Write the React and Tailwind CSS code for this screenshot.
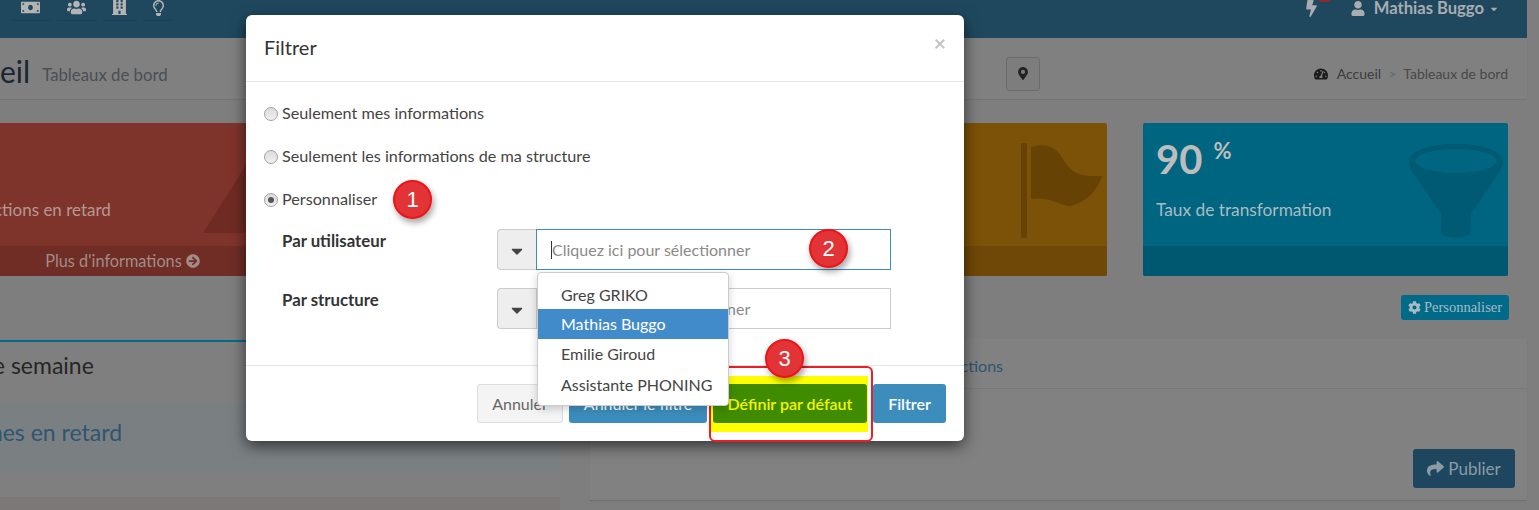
import { useState } from "react";
import {
  FaArrowCircleRight,
  FaBolt,
  FaBuilding,
  FaCaretDown,
  FaCog,
  FaMapMarkerAlt,
  FaMoneyBill,
  FaRegLightbulb,
  FaShare,
  FaTachometerAlt,
  FaUser,
  FaUsers,
} from "react-icons/fa";

const font = "font-['Lato','Liberation_Sans',sans-serif]";

function Funnel() {
  return (
    <svg viewBox="0 0 94 94" className="absolute right-[5px] top-[21px] w-[94px] h-[94px]">
      <path
        d="M0 18C0 6 22 0 47 0s47 6 47 18c0 5-3 10-6 14L62 70v17c0 4-7 7-15 7s-15-3-15-7V70L6 32C3 28 0 23 0 18z"
        fill="#005a74"
      />
      <ellipse cx="47" cy="17" rx="41" ry="12" fill="#006581" />
    </svg>
  );
}

function Flag() {
  return (
    <svg viewBox="0 0 81 95" className="absolute right-[5px] top-[20px] w-[81px] h-[95px]">
      <rect x="0" y="0" width="6" height="95" rx="1" fill="#664204" />
      <path
        d="M10 4C25 0 34 3 42 16c8 14 16 18 39 17-5 17-21 29-33 30-10-1-20-10-38-7z"
        fill="#664204"
      />
    </svg>
  );
}

function Triangle() {
  return (
    <svg viewBox="0 0 86 68" className="absolute left-[263px] top-[42px] w-[86px] h-[68px]">
      <path d="M43 0 86 68H0z" fill="#6f2b23" />
    </svg>
  );
}

function StatCard({ bg, foot, children, footer }) {
  return (
    <div className={`relative h-[153px] rounded-[2px] overflow-hidden flex flex-col ${bg}`}>
      <div className="flex-1 pl-[13px] pt-[16px] text-[#bdbdbd]">{children}</div>
      <div className={`h-[30px] flex items-center justify-center gap-[4px] text-[16.3px] text-[#a08c88] ${foot}`}>
        {footer}
      </div>
    </div>
  );
}

function Background() {
  return (
    <div className="w-[1587px] -ml-[60px]">
      <header className="h-[38px] bg-[#1f485f] flex items-start overflow-hidden pl-[70px]">
        <div className="flex gap-[5px] text-[#b4b4b4]">
          <div className="w-[41px] h-[21px] rounded-b-[4px] border-b border-[#1c4157] flex justify-center">
            <FaMoneyBill className="w-[19px] h-[19px] -mt-[2px]" />
          </div>
          <div className="w-[41px] h-[21px] rounded-b-[4px] border-b border-[#1c4157] flex justify-center">
            <FaUsers className="w-[19px] h-[19px] -mt-[2px]" />
          </div>
          <div className="w-[35px] h-[21px] rounded-b-[4px] border-b border-[#1c4157] flex justify-center">
            <FaBuilding className="w-[15px] h-[19px] -mt-[3px]" />
          </div>
          <div className="w-[32px] h-[21px] rounded-b-[4px] border-b border-[#1c4157] flex justify-center">
            <FaRegLightbulb className="w-[13px] h-[16px]" />
          </div>
        </div>
        <div className="relative ml-auto mr-[28px] flex items-center h-[17px] text-[#a8adb2]">
          <FaBolt className="w-[11px] h-[17px] -ml-[4px]" />
          <span className="absolute left-[8px] -top-[5px] w-[13px] h-[7px] rounded-full bg-[#8c2a2e]" />
          <FaUser className="w-[14px] h-[15px] ml-[34px]" />
          <span className="ml-[9px] text-[16.6px] font-bold">Mathias Buggo</span>
          <FaCaretDown className="w-[10px] h-[10px] ml-[5px]" />
        </div>
      </header>

      <div className="h-[61px] bg-[#808080] flex items-center pr-[19px] pt-[10px] shadow-[0_1px_1px_rgba(0,0,0,0.08)]">
        <h1 className="text-[30px] text-[#1b2530] font-normal leading-none -ml-[5px] -mt-[5px]">Accueil</h1>
        <span className="ml-[12px] mt-[3px] text-[16.8px] text-[#4a4f54]">Tableaux de bord</span>
        <button className="ml-[838px] w-[34px] h-[34px] rounded-[3px] border border-[#6c6c6c] bg-[#7d7d7d] flex items-center justify-center text-[#222]">
          <FaMapMarkerAlt className="w-[10px] h-[13px]" />
        </button>
        <nav className="ml-auto flex items-center text-[14px] text-[#3c3c3c]">
          <FaTachometerAlt className="w-[14px] h-[14px] text-[#1c1c1c] mr-[2px]" />
          <span className="ml-[7px]">Accueil</span>
          <span className="mx-[7px] text-[#666]">&gt;</span>
          <span className="text-[#484848]">Tableaux de bord</span>
        </nav>
      </div>

      <div className="grid grid-cols-[365px_365px_365px_365px] gap-[36px] pt-[24px]">
        <StatCard
          bg="bg-[#7f342b]"
          foot="bg-[#702d26]"
          footer={
            <>
              <span>Plus d'informations</span>
              <FaArrowCircleRight className="w-[14px] h-[14px]" />
            </>
          }
        >
          <Triangle />
          <div className="mt-[58px] -ml-[7px] text-[17px] text-[#b49892]">Transactions en retard</div>
        </StatCard>
        <StatCard bg="bg-[#006581]" foot="bg-[#005870]" />
        <StatCard bg="bg-[#7c5108]" foot="bg-[#6f4807]">
          <Flag />
        </StatCard>
        <StatCard bg="bg-[#006581]" foot="bg-[#005870]">
          <Funnel />
          <div className="flex items-start leading-none font-bold">
            <span className="text-[40px]">90</span>
            <span className="text-[22px] ml-[11px] mt-[1px]">%</span>
          </div>
          <div className="mt-[18px] text-[17.3px] text-[#a9bcc3]">Taux de transformation</div>
        </StatCard>
      </div>

      <div className="flex justify-end pr-[18px] mt-[19px]">
        <button className="h-[25px] w-[108px] rounded-[3px] bg-[#006a88] text-[#a6bcc4] flex items-center justify-center gap-[3px] text-[14.5px] font-['Liberation_Serif',serif]">
          <FaCog className="w-[13px] h-[13px]" />
          Personnaliser
        </button>
      </div>

      <div className="grid grid-cols-[620px_937px] gap-[30px] mt-[19px] items-start">
        <section className="border-t-2 border-t-[#006a88] mt-[1px] h-[170px] bg-[#7f7f7f]">
          <h2 className="h-[61px] pb-[14px] pl-[10px] flex items-center text-[23px] font-normal text-[#262626]">
            Cette semaine
          </h2>
          <div className="h-[70px] bg-[#7a7f82] flex items-center pl-[16px] pb-[12px] text-[23px] text-[#2f5570]">
            Tâches en retard
          </div>
          <div className="h-[24px]" />
          <div className="h-[13px] bg-[#7c7878]" />
        </section>
        <section className="h-[161px] bg-[#818181] shadow-[0_1px_1px_rgba(0,0,0,0.1)]">
          <div className="h-[50px] border-b border-[#787878] flex items-center pl-[360px] pt-[4px] text-[16px] text-[#2f5570]">
            Actions
          </div>
          <div className="flex justify-end pt-[60px] pr-[12px]">
            <button className="w-[102px] h-[39px] rounded-[3px] bg-[#1e475f] text-[#8b9ba6] text-[17px] flex items-center justify-center gap-[4px]">
              <FaShare className="w-[17px] h-[17px]" />
              Publier
            </button>
          </div>
        </section>
      </div>
    </div>
  );
}

function RadioRow({ checked, children }) {
  return (
    <label className="h-[43px] flex items-center text-[16.2px] text-[#444]">
      <span className="w-[14px] h-[14px] mr-[4px] rounded-full border border-[#a3a3a3] bg-gradient-to-b from-[#dcdcdc] to-[#f0f0f0] flex items-center justify-center">
        {checked && <span className="w-[6px] h-[6px] rounded-full bg-[#555]" />}
      </span>
      {children}
    </label>
  );
}

function SelectRow({ label, focused }) {
  return (
    <div className="flex items-start h-[59px] pl-[36px]">
      <div className="w-[215px] -mt-[1px] text-[16.8px] font-bold text-[#333]">{label}</div>
      <div className="flex h-[41px]">
        <div className="w-[39px] rounded-l-[4px] border border-r-0 border-[#ccc] bg-[#eee] flex items-center justify-center text-[#444]">
          <FaCaretDown className="w-[18px] h-[18px] mt-[3px]" />
        </div>
        <div
          className={`relative w-[355px] border flex items-center pl-[15px] text-[16px] text-[#8a8a8a] ${
            focused ? "border-[#3c8dbc]" : "border-[#ccc]"
          }`}
        >
          {focused && <span className="absolute left-[14px] top-[11px] w-px h-[18px] bg-[#333]" />}
          Cliquez ici pour sélectionner
        </div>
      </div>
    </div>
  );
}

function Badge({ className, children }) {
  return (
    <div
      className={`absolute w-[39px] h-[39px] rounded-full bg-[#e23437] border-2 border-[#f01218] text-white text-[22px] flex items-center justify-center shadow-[2px_4px_6px_rgba(0,0,0,0.35)] font-['Liberation_Sans',sans-serif] ${className}`}
    >
      {children}
    </div>
  );
}

function Dropdown() {
  const users = ["Greg GRIKO", "Mathias Buggo", "Emilie Giroud", "Assistante PHONING"];
  const [active] = useState(1);
  return (
    <ul className="absolute z-20 left-[291px] top-[257px] w-[192px] h-[134px] py-[5px] bg-white border border-[#ccc] rounded-[4px] shadow-[0_3px_8px_rgba(0,0,0,0.18)] text-[16px]">
      {users.map((u, i) => (
        <li
          key={u}
          className={`h-[30.5px] flex items-center pl-[23px] first:pt-[3px] ${
            i === active ? "bg-[#428bca] text-white" : "text-[#444]"
          }`}
        >
          {u}
        </li>
      ))}
    </ul>
  );
}

function FilterModal() {
  return (
    <div className="absolute left-[246px] top-[15px] w-[718px] h-[426px] bg-white rounded-[6px] shadow-[0_5px_15px_rgba(0,0,0,0.6)] flex flex-col isolate">
      <div className="h-[67px] shrink-0 border-b border-[#e5e5e5] flex items-center justify-between pl-[18px] pr-[18px] pb-[3px]">
        <h4 className="text-[20px] font-normal text-[#333]">Filtrer</h4>
        <span className="text-[21px] font-bold text-[#c4c4c4] -mt-[8px]">×</span>
      </div>
      <div className="flex-1 pt-[10px]">
        <div className="pl-[18px]">
          <RadioRow>Seulement mes informations</RadioRow>
          <RadioRow>Seulement les informations de ma structure</RadioRow>
          <RadioRow checked>Personnaliser</RadioRow>
        </div>
        <div className="pt-[8px]">
          <SelectRow label="Par utilisateur" focused />
          <SelectRow label="Par structure" />
        </div>
      </div>
      <div className="h-[76px] shrink-0 border-t border-[#e5e5e5] flex justify-end items-start gap-[6px] pt-[18px] pr-[18px] text-[16px]">
        <button className="w-[86px] h-[39px] rounded-[3px] bg-[#f4f4f4] border border-[#ddd] text-[#666]">Annuler</button>
        <button className="w-[138px] h-[39px] rounded-[3px] bg-[#3c8dbc] text-white">Annuler le filtre</button>
        <div className="relative h-[39px]">
          <span className="absolute -left-[2px] -right-[1px] -top-[8px] -bottom-[9px] bg-[#ffff00]" />
          <button className="relative w-[154px] h-[39px] rounded-[3px] bg-[#408c00] text-[#f4f400] font-semibold">
            Définir par défaut
          </button>
        </div>
        <button className="w-[73px] h-[39px] rounded-[3px] bg-[#3c8dbc] text-white font-semibold">Filtrer</button>
      </div>
      <Dropdown />
      <div className="absolute z-10 left-[463px] top-[351px] w-[164px] h-[76px] rounded-[6px] border-2 border-[#ee1c25]" />
    </div>
  );
}

export default function App() {
  return (
    <div className={`relative w-[1539px] h-[510px] overflow-hidden bg-[#7e7e7e] ${font}`}>
      <Background />
      <FilterModal />
      <Badge className="left-[393px] top-[180px]">1</Badge>
      <Badge className="left-[809px] top-[229px]">2</Badge>
      <Badge className="left-[765px] top-[339px]">3</Badge>
    </div>
  );
}
